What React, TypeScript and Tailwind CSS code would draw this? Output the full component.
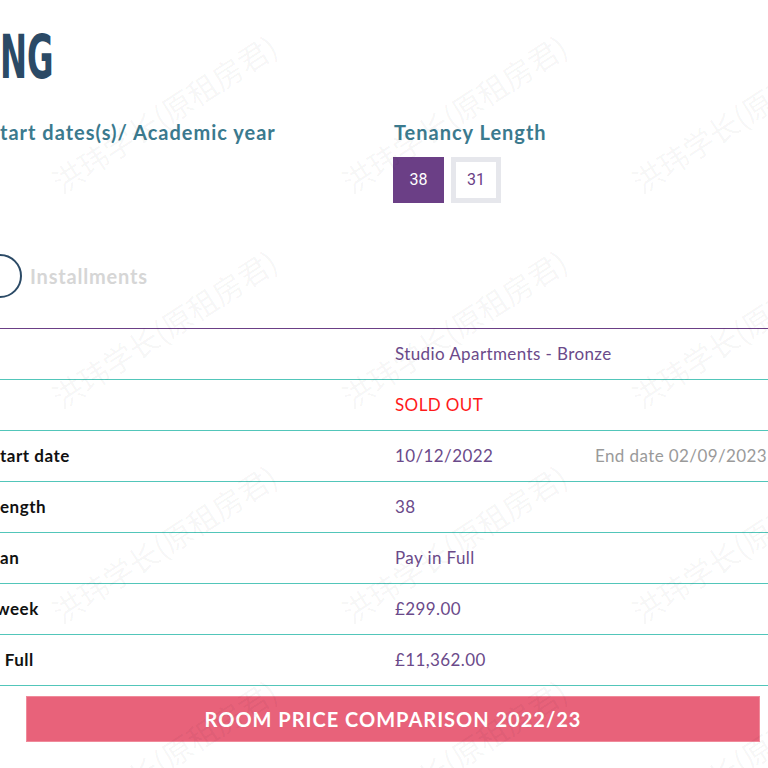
import React from "react";

const WM = "洪玮学长(原租房君)";

function Watermarks() {
  const spots: { x: number; y: number }[] = [];
  const ys = [-20, 195, 410, 625];
  const xs = [55, 345, 635];
  ys.forEach((y) => xs.forEach((x) => spots.push({ x, y })));
  return (
    <div className="pointer-events-none absolute inset-0 overflow-hidden">
      {spots.map((s, i) => (
        <div
          key={i}
          className="absolute origin-left -rotate-[33deg] whitespace-nowrap text-[30px] text-[rgba(0,0,0,0.045)]"
          style={{ left: s.x, top: s.y + 182, fontFamily: '"Noto Sans CJK SC", sans-serif' }}
        >
          {WM}
        </div>
      ))}
    </div>
  );
}

const rows: { label: string; value: string; extra?: string; red?: boolean; labelMl?: string }[] = [
  { label: "", value: "Studio Apartments - Bronze" },
  { label: "", value: "SOLD OUT", red: true },
  { label: "tart date", value: "10/12/2022", extra: "End date 02/09/2023" },
  { label: "ength", value: "38" },
  { label: "an", value: "Pay in Full" },
  { label: "week", value: "£299.00", labelMl: "-ml-[4px]" },
  { label: " Full", value: "£11,362.00", labelMl: "" },
];

export default function App() {
  return (
    <div
      className="relative h-[768px] w-[768px] overflow-hidden bg-white"
      style={{ fontFamily: 'Lato, "Noto Sans", sans-serif' }}
    >
      <div className="pt-[29px]">
        <div
          className="h-[56px] origin-left scale-x-[0.6] text-[60px] font-bold leading-[56px] text-[#2b4a66]"
          style={{ fontFamily: '"Liberation Sans Narrow", "DejaVu Sans Condensed", sans-serif' }}
        >
          NG
        </div>
      </div>

      <div className="mt-[34px] grid grid-cols-[394px_1fr]">
        <div className="text-[20px] font-bold leading-[26px] tracking-[1px] text-[#3b7a8e]">tart dates(s)/ Academic year</div>
        <div>
          <div className="text-[20px] font-bold leading-[26px] tracking-[1px] text-[#3b7a8e]">Tenancy Length</div>
          <div className="mt-[12px] flex gap-[7px]" style={{ fontFamily: 'Roboto, sans-serif' }}>
            <div className="-ml-[1px] flex h-[46px] w-[51px] items-center justify-center bg-[#6b3f86] text-[16px] text-white">38</div>
            <div className="flex h-[46px] w-[50px] items-center justify-center border-[5px] border-[#e6e7ec] bg-white text-[16px] text-[#6b3f86]">31</div>
          </div>
        </div>
      </div>

      <div className="mt-[51px] flex h-[44px] items-center">
        <div className="-ml-[23px] h-[44px] w-[45px] shrink-0 rounded-full border-2 border-[#2b4a66]" />
        <div className="ml-[8px] text-[20px] font-bold tracking-[0.8px] text-[#d6d6d6]">Installments</div>
      </div>

      <div className="mt-[30px] border-t border-[#6b3f86]">
        {rows.map((r, i) => (
          <div
            key={i}
            className="grid h-[51px] grid-cols-[395px_200px_1fr] items-center border-b border-[#52c6ba] text-[17px]"
          >
            <div className={`whitespace-pre font-bold tracking-[0.5px] text-[#111] ${r.labelMl ?? ""}`}>{r.label}</div>
            <div className={`whitespace-nowrap tracking-[0.4px] ${r.red ? "text-[#ff1a1a]" : "text-[#6b4a8a]"}`}>{r.value}</div>
            <div className="whitespace-nowrap tracking-[0.4px] text-[#9a9a9a]">{r.extra ?? ""}</div>
          </div>
        ))}
      </div>

      <div className="mt-[10px] pl-[26px] pr-[8px]">
        <div className="flex h-[46px] items-center justify-center border border-[#f08a9a] bg-[#e8627a] text-[20px] font-bold uppercase tracking-[1px] text-white">
          ROOM PRICE COMPARISON 2022/23
        </div>
      </div>

      <Watermarks />
    </div>
  );
}
